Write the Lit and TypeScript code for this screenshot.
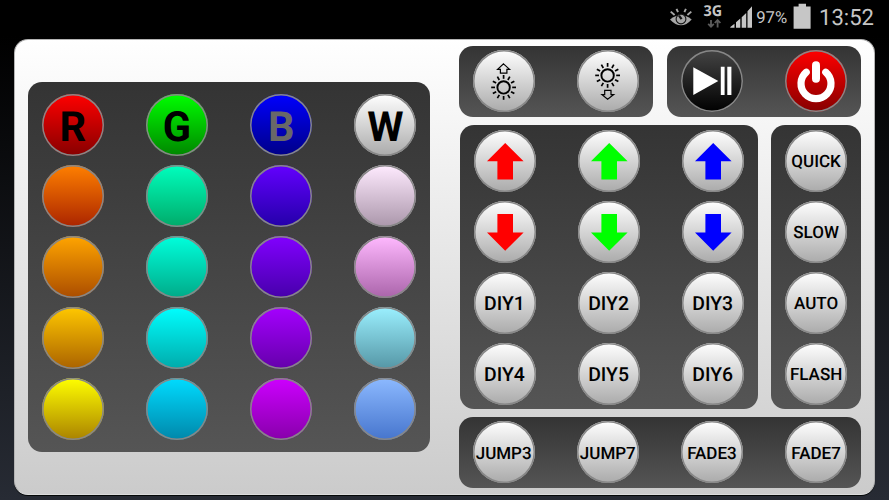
import { LitElement, html, css, svg, nothing } from "lit";
import { customElement, property } from "lit/decorators.js";

type Swatch = { from: string; to: string; label?: string; ink?: string };

const SWATCHES: Swatch[] = [
  { from: "#ff0000", to: "#860000", label: "R" },
  { from: "#00ff00", to: "#008600", label: "G" },
  { from: "#0000ff", to: "#000086", label: "B", ink: "#686868" },
  { from: "#ffffff", to: "#aaaaaa", label: "W" },
  { from: "#ff8000", to: "#aa2400" },
  { from: "#00ffbe", to: "#00aa69" },
  { from: "#6400ff", to: "#2300a8" },
  { from: "#ffebff", to: "#aa96aa" },
  { from: "#ffa500", to: "#aa4c00" },
  { from: "#00ffdc", to: "#00aa88" },
  { from: "#8200ff", to: "#4600aa" },
  { from: "#ffb9ff", to: "#aa64aa" },
  { from: "#ffc800", to: "#aa6200" },
  { from: "#00ffff", to: "#00aaaa" },
  { from: "#a500ff", to: "#6400aa" },
  { from: "#9bf0ff", to: "#5596a5" },
  { from: "#ffff00", to: "#aa8200" },
  { from: "#00dcff", to: "#0087aa" },
  { from: "#cd00ff", to: "#8700aa" },
  { from: "#8cb9ff", to: "#4675cd" },
];

const RAYS = [0, 30, 60, 90, 120, 150, 180, 210, 240, 270, 300, 330];

const sun = (cy: number) => svg`
  <circle cx="30.6" cy=${cy} r="6.2" fill="none" stroke="#000" stroke-width="1.9"/>
  ${RAYS.map(
    (a) => svg`<path d="M30.6 ${cy - 8.6}V${cy - 12.4}" transform="rotate(${a} 30.6 ${cy})" stroke="#000" stroke-width="1.7"/>`
  )}`;

const ICONS: Record<string, unknown> = {
  brighter: svg`${sun(37.4)}<path d="M30.5 13.9L36.6 19.4H33.9V23.2H27.4V19.4H24.6Z" fill="none" stroke="#000" stroke-width="1.2"/>`,
  dimmer: svg`${sun(25.4)}<path d="M30.6 49.2L36.6 44.7H34V40.3H27.7V44.7H25Z" fill="none" stroke="#000" stroke-width="1.2"/>`,
  up: svg`<path d="M31.2 13L49.6 31.2H39V49.6H23.4V31.2H13Z" fill="currentColor"/>`,
  down: svg`<path d="M31.2 49.8L49.6 31.6H39V13H23.4V31.6H13Z" fill="currentColor"/>`,
  play: svg`<path d="M12.3 17.2L37.3 31L12.3 45ZM39.8 16.7H43.6V45H39.8ZM46.3 16.7H50.4V45H46.3Z" fill="#fff"/>`,
  power: svg`<path d="M21.2 22.2A15 15 0 1 0 40.8 22.2" fill="none" stroke="#fff" stroke-width="7.2" stroke-linecap="round"/><path d="M31 15.2V28.8" stroke="#fff" stroke-width="8" stroke-linecap="round"/>`,
};

@customElement("remote-key")
export class RemoteKey extends LitElement {
  @property() label = "";
  @property() icon = "";
  @property() from = "#ffffff";
  @property() to = "#aaaaaa";
  @property() ink = "#000000";
  @property() size = "word";

  static styles = css`
    :host { display: block; width: 62px; height: 62px; }
    .key {
      width: 62px; height: 62px; border-radius: 50%;
      box-shadow: inset 0 0 0 1.5px #878787; display: grid; place-items: center;
      font-family: Roboto, "Liberation Sans", sans-serif;
      text-rendering: geometricPrecision; white-space: nowrap;
    }
    .key > * { grid-area: 1 / 1; }
    .art { display: block; width: 62px; height: 62px; }
    .letter { font-size: 41.5px; font-weight: 700; line-height: 56px; padding-top: 6px; }
    .diy { font-size: 19.4px; font-weight: 500; padding: 2px 1px 0 0; }
    .word { font-size: 17px; font-weight: 500; padding-top: 3px; }
  `;

  render() {
    return html`<div class="key" style="background-image:linear-gradient(${this.from},${this.to});color:${this.ink}">
      ${this.icon ? html`<svg class="art" viewBox="0 0 62 62">${ICONS[this.icon]}</svg>` : nothing}
      ${this.label ? html`<span class=${this.size}>${this.label}</span>` : nothing}
    </div>`;
  }
}

@customElement("phone-status")
export class PhoneStatus extends LitElement {
  static styles = css`
    :host { display: block; height: 36px; background: #000; }
    .bar {
      display: block; width: 889px; height: 36px;
      font-family: Roboto, "Liberation Sans", sans-serif; text-rendering: geometricPrecision;
    }
    .net { font: 700 15px "Noto Sans", "Open Sans", sans-serif; }
    .pct { font-size: 16.5px; }
    .clock { font-size: 22.5px; }
  `;

  render() {
    return html`<svg class="bar" viewBox="0 0 889 36" fill="#c6c6c6">
      <path d="M670 19.4Q681 10.4 691.7 19.4Q681 31.2 670 19.4Z" fill="#a6a6a6"/>
      <circle cx="681" cy="19" r="4.9" fill="#a6a6a6" stroke="#111" stroke-width="1.1"/>
      <path d="M679 15.6L681.6 19.2" stroke="#111" stroke-width="2.2"/>
      <path d="M670.7 11.6L674.6 15M676.5 8.8L678 12.2M685.9 8.8L684.4 12.2M691.3 11.6L687.4 15" stroke="#a6a6a6" stroke-width="1.9"/>
      <text class="net" x="703.6" y="16.3" textLength="18.6" lengthAdjust="spacingAndGlyphs">3G</text>
      <path d="M711 20V26.5M708.2 23.8L711 26.8L713.8 23.8M717.6 27.5V20.5M714.8 23L717.6 20L720.4 23" fill="none" stroke="#5c5c5c" stroke-width="1.8"/>
      <path d="M730.3 27.8V27L734.5 23.7V27.8ZM736 27.8V22.2L740.3 18.5V27.8ZM741.7 27.8V17.2L746.2 13V27.8ZM747.5 27.8V11.3L752 6.3V27.8Z"/>
      <text class="pct" x="756.2" y="23.2" textLength="31" lengthAdjust="spacingAndGlyphs">97%</text>
      <path d="M798.6 3.8H806V6.6H810.6V28.8H793.6V6.6H798.6Z"/>
      <text class="clock" x="819" y="24.8" textLength="55" lengthAdjust="spacingAndGlyphs">13:52</text>
    </svg>`;
  }
}

@customElement("app-root")
export class AppRoot extends LitElement {
  static styles = css`
    :host {
      display: flex; flex-direction: column; width: 889px; height: 500px; overflow: hidden;
      background: linear-gradient(#000 0, #000 36px, #272b34 500px);
    }
    .board {
      box-sizing: border-box; width: 861.4px; height: 456px; margin: 3px 0 0 13.8px;
      border-radius: 14px; border: 1px solid #b4b4b4; border-bottom-color: #dcdcdc;
      background: linear-gradient(#fff, #cbcbcb) border-box;
      display: flex; justify-content: space-between; padding: 6.3px 13px 0 13px;
      box-shadow: 0 1px 0 #050808;
    }
    .group {
      box-sizing: border-box; border-radius: 14px;
      background: linear-gradient(#343434, #555555);
      display: grid; grid-template-columns: repeat(var(--cols), 62px);
      column-gap: 42.15px; row-gap: 9px; justify-content: center; align-content: start;
      padding-top: 4.2px;
    }
    .colors { --cols: 4; width: 402.6px; height: 370.2px; margin-top: 35.6px; padding-top: 12.5px; row-gap: 8.9px; }
    .controls { width: 402.6px; display: flex; flex-direction: column; gap: 8.4px; }
    .row { display: flex; justify-content: space-between; }
    .middle { padding-left: 1.7px; }
    .pair { --cols: 2; width: 194.3px; height: 70.8px; }
    .modes { --cols: 3; width: 298.2px; height: 283.2px; padding-right: 0.6px; }
    .speeds { --cols: 1; width: 90.2px; height: 283.2px; }
    .effects { --cols: 4; height: 70.8px; }
  `;

  render() {
    const hues = ["#ff0000", "#00ff00", "#0000ff"];
    return html`
      <phone-status></phone-status>
      <main class="board">
        <section class="group colors">
          ${SWATCHES.map(
            (s) => html`<remote-key size="letter" .from=${s.from} .to=${s.to} .label=${s.label ?? ""} .ink=${s.ink ?? "#000000"}></remote-key>`
          )}
        </section>
        <div class="controls">
          <div class="row">
            <section class="group pair">
              <remote-key icon="brighter"></remote-key>
              <remote-key icon="dimmer"></remote-key>
            </section>
            <section class="group pair">
              <remote-key icon="play" from="#444444" to="#000000"></remote-key>
              <remote-key icon="power" from="#ff0000" to="#860000"></remote-key>
            </section>
          </div>
          <div class="row middle">
            <section class="group modes">
              ${["up", "down"].map((dir) => hues.map((h) => html`<remote-key icon=${dir} ink=${h}></remote-key>`))}
              ${[1, 2, 3, 4, 5, 6].map((n) => html`<remote-key size="diy" label="DIY${n}"></remote-key>`)}
            </section>
            <section class="group speeds">
              ${["QUICK", "SLOW", "AUTO", "FLASH"].map((t) => html`<remote-key label=${t}></remote-key>`)}
            </section>
          </div>
          <section class="group effects">
            ${["JUMP3", "JUMP7", "FADE3", "FADE7"].map((t) => html`<remote-key label=${t}></remote-key>`)}
          </section>
        </div>
      </main>
    `;
  }
}
